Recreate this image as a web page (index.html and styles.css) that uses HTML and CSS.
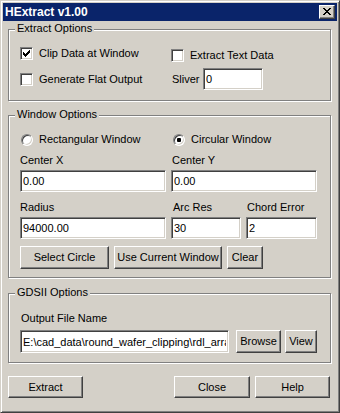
FILE: index.html
```html
<!DOCTYPE html>
<html lang="en">
<head>
    <meta charset="UTF-8">
    <title>HExtract v1.00</title>
    <link rel="stylesheet" href="styles.css">
</head>
<body>
    <div class="window">
        <div class="titlebar">
            <span class="title">HExtract v1.00</span>
            <button class="close-btn" type="button" aria-label="Close">
                <svg width="8" height="7" viewBox="0 0 8 7" shape-rendering="crispEdges">
                    <path fill="#000" d="M0 0h2v1H0z M6 0h2v1H6z M1 1h2v1H1z M5 1h2v1H5z M2 2h4v1H2z M3 3h2v1H3z M2 4h4v1H2z M1 5h2v1H1z M5 5h2v1H5z M0 6h2v1H0z M6 6h2v1H6z"/>
                </svg>
            </button>
        </div>

        <div class="client">
            <div class="group group-extract">
                <span class="legend">Extract Options</span>
                <div class="opts">
                    <label class="check-row first">
                        <span class="check">
                            <svg width="9" height="9" viewBox="2 2 9 9" shape-rendering="crispEdges">
                                <path fill="#000" d="M9 3h1v1H9z M8 4h2v1H8z M3 5h1v1H3z M7 5h3v1H7z M3 6h2v1H3z M6 6h3v1H6z M3 7h5v1H3z M4 8h3v1H4z M5 9h1v1H5z"/>
                            </svg>
                        </span>
                        Clip Data at Window
                    </label>
                    <label class="check-row first lower">
                        <span class="check"></span>
                        Extract Text Data
                    </label>
                    <label class="check-row">
                        <span class="check"></span>
                        Generate Flat Output
                    </label>
                    <div class="sliver">
                        <span class="sliver-label">Sliver</span>
                        <input class="edit sliver-edit" type="text" value="0">
                    </div>
                </div>
            </div>

            <div class="group group-window">
                <span class="legend">Window Options</span>
                <div class="radios">
                    <label class="check-row"><span class="radio"></span>Rectangular Window</label>
                    <label class="check-row"><span class="radio on"></span>Circular Window</label>
                </div>

                <div class="fields fields-center">
                    <div class="field">
                        <span class="caption">Center X</span>
                        <input class="edit" type="text" value="0.00">
                    </div>
                    <div class="field">
                        <span class="caption shift">Center Y</span>
                        <input class="edit" type="text" value="0.00">
                    </div>
                </div>

                <div class="fields fields-radius">
                    <div class="field">
                        <span class="caption">Radius</span>
                        <input class="edit" type="text" value="94000.00">
                    </div>
                    <div class="field">
                        <span class="caption shift2">Arc Res</span>
                        <input class="edit" type="text" value="30">
                    </div>
                    <div class="field">
                        <span class="caption shift">Chord Error</span>
                        <input class="edit" type="text" value="2">
                    </div>
                </div>

                <div class="btn-row">
                    <button class="btn btn-select" type="button">Select Circle</button>
                    <button class="btn btn-current" type="button">Use Current Window</button>
                    <button class="btn btn-clear" type="button">Clear</button>
                </div>
            </div>

            <div class="group group-gds">
                <span class="legend">GDSII Options</span>
                <span class="caption">Output File Name</span>
                <div class="file-row">
                    <input class="edit file-edit" type="text" value="E:\cad_data\round_wafer_clipping\rdl_array.gds">
                    <button class="btn btn-browse" type="button">Browse</button>
                    <button class="btn btn-view" type="button">View</button>
                </div>
            </div>

            <div class="actions">
                <button class="btn btn-main" type="button">Extract</button>
                <div class="actions-right">
                    <button class="btn btn-main btn-close" type="button">Close</button>
                    <button class="btn btn-main" type="button">Help</button>
                </div>
            </div>
        </div>
    </div>
</body>
</html>
```

FILE: styles.css
```css
* {
    box-sizing: border-box;
}
body {
    margin: 0;
    font-family: "Liberation Sans", Arial, sans-serif;
    font-size: 11px;
    line-height: 13px;
    color: #000;
    background: #d4d0c8;
}
.window {
    width: 340px;
    height: 413px;
    padding: 2px;
    background: #d4d0c8;
    border: 1px solid;
    border-color: #d4d0c8 #404040 #404040 #d4d0c8;
    box-shadow: inset 1px 1px #fff, inset -1px -1px #808080;
}
.titlebar {
    height: 18px;
    padding: 0 2px;
    background: #0a246a;
    color: #fff;
    display: flex;
    align-items: center;
    justify-content: space-between;
}
.title {
    font-weight: bold;
    font-size: 12px;
}
.close-btn {
    width: 16px;
    height: 14px;
    padding: 0;
    background: #d4d0c8;
    border: 1px solid;
    border-color: #fff #404040 #404040 #fff;
    box-shadow: inset -1px -1px #808080;
    display: flex;
    align-items: center;
    justify-content: center;
}
.close-btn svg {
    display: block;
    margin: 0 1px 1px 0;
}
.client {
    padding: 8px 6px 0 5px;
}
.group {
    position: relative;
    border: 1px solid #808080;
    box-shadow: inset 1px 1px #fff, 1px 1px #fff;
    padding: 17px 13px 10px 11px;
}
.group-window {
    margin-top: 14px;
    padding-bottom: 8px;
}
.group-gds {
    margin-top: 15px;
    padding-top: 18px;
    padding-bottom: 9px;
}
.legend {
    position: absolute;
    top: -8px;
    left: 6px;
    padding: 0 2px;
    background: #d4d0c8;
}

/* checkboxes and radios */
.opts {
    display: grid;
    grid-template-columns: 151px 1fr;
    row-gap: 6px;
    align-items: center;
}
.check-row {
    display: flex;
    align-items: center;
    gap: 6px;
    height: 13px;
    white-space: nowrap;
}
.check-row.first {
    align-self: start;
}
.check-row.lower {
    margin-top: 2px;
}
.check {
    flex: none;
    width: 13px;
    height: 13px;
    padding: 1px;
    background: #fff;
    border: 1px solid;
    border-color: #808080 #fff #fff #808080;
    box-shadow: inset 1px 1px #404040, inset -1px -1px #d4d0c8;
}
.check svg {
    display: block;
}
.radios {
    display: grid;
    grid-template-columns: 152px 1fr;
    padding-left: 1px;
}
.radio {
    flex: none;
    width: 12px;
    height: 12px;
    border-radius: 50%;
    background: #fff;
    border: 1px solid;
    border-color: #808080 #fff #fff #808080;
    box-shadow: inset 1px 1px #404040, inset -1px -1px #d4d0c8;
    display: flex;
    align-items: center;
    justify-content: center;
}
.radio.on::after {
    content: "";
    width: 4px;
    height: 4px;
    border-radius: 1px;
    background: #000;
}
.sliver {
    display: flex;
    align-items: center;
}
.sliver-label {
    width: 32px;
    padding-left: 1px;
}
.sliver-edit {
    width: 60px;
}

/* edit fields */
.edit {
    height: 22px;
    padding: 0 2px;
    font: inherit;
    color: #000;
    background: #fff;
    border: 1px solid;
    border-color: #808080 #fff #fff #808080;
    box-shadow: inset 1px 1px #404040, inset -1px -1px #d4d0c8;
    outline: none;
}
.fields {
    display: grid;
    column-gap: 5px;
}
.fields-center {
    grid-template-columns: 146px 146px;
    margin-top: 8px;
}
.fields-radius {
    grid-template-columns: 146px 70px 71px;
    margin-top: 9px;
}
.field {
    display: flex;
    flex-direction: column;
    gap: 3px;
}
.field .edit {
    width: 100%;
}
.caption {
    display: block;
    white-space: nowrap;
}
.caption.shift {
    padding-left: 1px;
}
.caption.shift2 {
    padding-left: 2px;
}

/* buttons */
.btn {
    height: 23px;
    padding: 0;
    font: inherit;
    color: #000;
    background: #d4d0c8;
    border: 1px solid;
    border-color: #fff #404040 #404040 #fff;
    box-shadow: inset -1px -1px #808080;
}
.btn-row {
    display: flex;
    gap: 5px;
    margin-top: 7px;
}
.btn-select {
    width: 89px;
}
.btn-current {
    width: 108px;
}
.btn-clear {
    width: 36px;
}
.group-gds .caption {
    padding-left: 1px;
}
.file-row {
    display: flex;
    margin-top: 5px;
}
.file-edit {
    width: 209px;
    height: 23px;
}
.btn-browse {
    width: 45px;
    margin-left: 7px;
}
.btn-view {
    width: 32px;
    margin-left: 4px;
}
.actions {
    display: flex;
    justify-content: space-between;
    margin: 13px 1px 0 0;
}
.actions-right {
    display: flex;
    gap: 5px;
}
.btn-main {
    width: 75px;
    height: 22px;
}
.btn-close {
    width: 76px;
}
```
